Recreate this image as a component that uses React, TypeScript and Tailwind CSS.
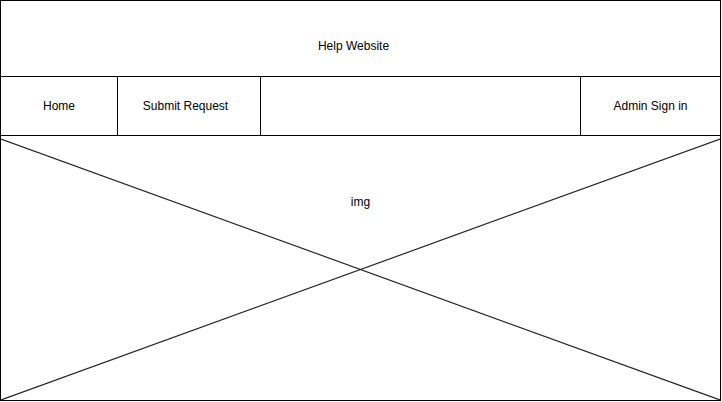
export default function App() {
  const font = { fontFamily: '"Liberation Sans", Arial, sans-serif' };
  return (
    <div className="w-[722px] h-[402px] bg-white" style={font}>
      <div className="w-[721px] h-[401px] border border-black flex flex-col text-[12px] leading-[14px] text-black">
        <div className="h-[76px] border-b border-black flex justify-center pt-[38px] pr-[14px]">
          Help Website
        </div>
        <div className="h-[59px] border-b border-black flex">
          <div className="w-[117px] border-r border-black flex items-center justify-center">Home</div>
          <div className="w-[143px] border-r border-black flex items-center justify-center pr-[7px]">Submit Request</div>
          <div className="w-[320px] border-r border-black"></div>
          <div className="flex-1 flex items-center justify-center">Admin Sign in</div>
        </div>
        <div className="relative flex-1 flex justify-center pt-[59px]">
          <svg className="absolute inset-0 w-full h-full" viewBox="0 0 719 264" preserveAspectRatio="none">
            <line x1="0" y1="3" x2="719" y2="264" stroke="#262626" strokeWidth="1.2" />
            <line x1="0" y1="264" x2="719" y2="3" stroke="#262626" strokeWidth="1.2" />
          </svg>
          <span className="relative">img</span>
        </div>
      </div>
    </div>
  );
}
